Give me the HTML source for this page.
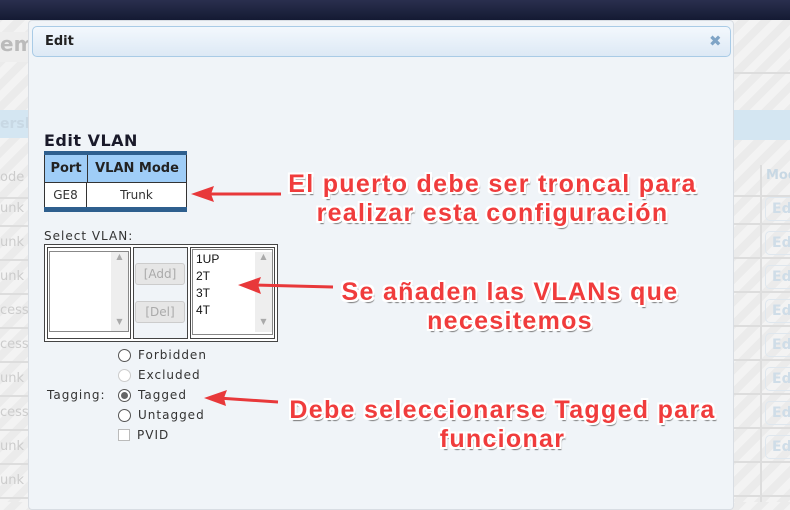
<!DOCTYPE html>
<html><head><meta charset="utf-8"><style>
*{margin:0;padding:0;box-sizing:border-box}
body{width:790px;height:502px;overflow:hidden;position:relative;font-family:"DejaVu Sans","Liberation Sans",sans-serif;background:repeating-linear-gradient(135deg,#f3f3f3 0 8px,#ebebeb 8px 16px)}
.abs{position:absolute}
.top{left:0;top:0;width:790px;height:20px;background:linear-gradient(#2a2f4e,#141a33)}
.row{position:absolute;height:34px;border-bottom:2px solid #ddd;font-size:13px;color:#ccc}
.dlg{left:28px;top:20px;width:706px;height:490px;background:#f0f4f8;border:1px solid #d8dde3;border-radius:4px}
.hdr{left:32px;top:26px;width:699px;height:31px;border:1px solid #a9cbe6;border-radius:5px;background:linear-gradient(#f3f8fd,#dde9f5);font-weight:bold;font-size:13px;color:#222;padding:7px 0 0 12px}
.ann{position:absolute;font-family:"Liberation Sans",sans-serif;font-weight:bold;font-size:25px;color:#f03c3c;text-align:center;line-height:29px;letter-spacing:1.3px;white-space:nowrap;
text-shadow:-2px -2px 0 #fff,2px -2px 0 #fff,-2px 2px 0 #fff,2px 2px 0 #fff,0 2px 0 #fff,0 -2px 0 #fff,2px 0 0 #fff,-2px 0 0 #fff,2px 3px 1px #777}
.lbl{font-size:12px;color:#333;letter-spacing:1px}
.rad{position:absolute;width:13px;height:13px;border:1px solid #555;border-radius:50%;background:#fff}
.ed{border:1px solid #dfe7ee;border-radius:5px;padding-left:6px;width:40px;height:24px;line-height:22px;margin-bottom:10px}
</style></head><body>
<div class="abs top"></div>
<div class="abs" style="left:0;top:32px;width:28px;height:30px;font-size:20px;color:#bbb;font-weight:bold;background:#eee">em</div>
<div class="abs" style="left:0;top:110px;width:28px;height:28px;background:#d4e6f2;color:#c8d8e4;font-size:14px;font-weight:bold;padding-top:6px">ersh</div>
<div class="row" style="left:0;top:165px;width:28px;padding-top:5px">ode</div>
<div class="row" style="left:0;top:193px;width:28px;padding-top:8px">unk</div>
<div class="row" style="left:0;top:227px;width:28px;padding-top:8px">unk</div>
<div class="row" style="left:0;top:261px;width:28px;padding-top:8px">unk</div>
<div class="row" style="left:0;top:295px;width:28px;padding-top:8px">cess</div>
<div class="row" style="left:0;top:329px;width:28px;padding-top:8px">cess</div>
<div class="row" style="left:0;top:363px;width:28px;padding-top:8px">unk</div>
<div class="row" style="left:0;top:397px;width:28px;padding-top:8px">cess</div>
<div class="row" style="left:0;top:431px;width:28px;padding-top:8px">unk</div>
<div class="row" style="left:0;top:465px;width:28px;padding-top:8px">unk</div>
<div class="abs" style="left:734px;top:72px;width:56px;height:2px;background:#ddd"></div>
<div class="abs" style="left:734px;top:110px;width:56px;height:30px;background:#d4e6f2"></div>
<div class="abs" style="left:760px;top:165px;width:2px;height:337px;background:#ddd"></div>
<div class="row" style="left:734px;top:163px;width:56px;padding:5px 0 0 32px;color:#c8d8e4;font-weight:bold">Mod</div>
<div class="row" style="left:734px;top:191px;width:56px"></div>
<div class="row" style="left:734px;top:225px;width:56px"></div>
<div class="row" style="left:734px;top:259px;width:56px"></div>
<div class="row" style="left:734px;top:293px;width:56px"></div>
<div class="row" style="left:734px;top:327px;width:56px"></div>
<div class="row" style="left:734px;top:361px;width:56px"></div>
<div class="row" style="left:734px;top:395px;width:56px"></div>
<div class="row" style="left:734px;top:429px;width:56px"></div>
<div class="row" style="left:734px;top:463px;width:56px"></div>
<div class="abs" style="left:765px;top:197px;font-size:14px;color:#cfdde8;font-weight:bold">
<div class="ed">Ed</div><div class="ed">Ed</div><div class="ed">Ed</div><div class="ed">Ed</div>
<div class="ed">Ed</div><div class="ed">Ed</div><div class="ed">Ed</div><div class="ed">Ed</div>
</div>
<div class="abs dlg"></div>
<div class="abs hdr">Edit</div>
<div class="abs" style="left:709px;top:32px;font-size:15px;font-weight:bold;color:#7fa4c6">✖</div>
<div class="abs" style="left:44px;top:131px;font-size:16px;font-weight:bold;color:#1a1a2a;letter-spacing:0.5px">Edit VLAN</div>
<div class="abs" style="left:44px;top:151px;width:143px;height:61px;background:#2e5f8e;padding:4px 0 0 0">
 <div style="display:flex;height:27px;background:#9fcdf7;font-size:13px;font-weight:bold;color:#222;border-left:1px solid #333;border-right:1px solid #333">
  <div style="width:43px;border-right:1px solid #333;text-align:center;line-height:27px">Port</div>
  <div style="flex:1;text-align:center;line-height:27px">VLAN Mode</div></div>
 <div style="display:flex;height:25px;background:#fff;font-size:12px;color:#333;border:1px solid #333;border-bottom:none">
  <div style="width:42px;border-right:1px solid #333;text-align:center;line-height:24px">GE8</div>
  <div style="flex:1;text-align:center;line-height:24px">Trunk</div></div>
</div>
<div class="abs lbl" style="left:44px;top:229px">Select VLAN:</div>
<div class="abs" style="left:44px;top:244px;width:234px;height:98px;border:1px solid #444;background:#fff"></div>
<div class="abs" style="left:47px;top:247px;width:84px;height:92px;border:1px solid #444"></div>
<div class="abs" style="left:49px;top:251px;width:80px;height:81px;border:1px solid #888;background:#fff"></div>
<div class="abs" style="left:111px;top:252px;width:17px;height:79px;background:#eee;font-size:8px;color:#aaa;text-align:center">▲<div style="margin-top:56px">▼</div></div>
<div class="abs" style="left:133px;top:247px;width:55px;height:92px;border:1px solid #444;background:#f0f4f8"></div>
<div class="abs" style="left:135px;top:263px;width:50px;height:22px;border:1px solid #ccc;border-radius:3px;background:#e6e6e6;color:#aaa;font-size:12px;text-align:center;line-height:20px">[Add]</div>
<div class="abs" style="left:135px;top:301px;width:50px;height:22px;border:1px solid #ccc;border-radius:3px;background:#e6e6e6;color:#aaa;font-size:12px;text-align:center;line-height:20px">[Del]</div>
<div class="abs" style="left:190px;top:247px;width:85px;height:92px;border:1px solid #444"></div>
<div class="abs" style="left:192px;top:249px;width:81px;height:86px;border:1px solid #888;background:#fff;font-size:12px;line-height:17px;color:#111;padding:1px 0 0 3px;font-family:'Liberation Sans',sans-serif">1UP<br>2T<br>3T<br>4T</div>
<div class="abs" style="left:255px;top:252px;width:17px;height:80px;background:#eee;font-size:8px;color:#aaa;text-align:center">▲<div style="margin-top:56px">▼</div></div>
<div class="rad" style="left:118px;top:349px"></div><div class="abs lbl" style="left:138px;top:348px">Forbidden</div>
<div class="rad" style="left:118px;top:369px;border-color:#ccc"></div><div class="abs lbl" style="left:138px;top:368px">Excluded</div>
<div class="abs lbl" style="left:47px;top:388px">Tagging:</div>
<div class="rad" style="left:118px;top:389px"><div style="width:7px;height:7px;margin:2px;border-radius:50%;background:#666"></div></div><div class="abs lbl" style="left:138px;top:388px">Tagged</div>
<div class="rad" style="left:118px;top:409px"></div><div class="abs lbl" style="left:138px;top:408px">Untagged</div>
<div class="abs" style="left:118px;top:429px;width:12px;height:12px;border:1px solid #bbb;background:#fff"></div><div class="abs lbl" style="left:137px;top:428px">PVID</div>
<svg class="abs" style="left:0;top:0" width="790" height="502">
<g stroke="#e8383a" stroke-width="3" fill="#e8383a">
<line x1="205" y1="194" x2="281" y2="194"/><polygon points="191,194 214,186 211,194 214,202" stroke="none"/>
<line x1="252" y1="285" x2="333" y2="287"/><polygon points="238,285 261,277 258,285 261,294" stroke="none"/>
<line x1="218" y1="398" x2="278" y2="402"/><polygon points="204,398 227,390 224,398 226,406" stroke="none"/>
</g></svg>
<div class="ann" style="left:280px;top:170px;width:425px">El puerto debe ser troncal para<br>realizar esta configuración</div>
<div class="ann" style="left:330px;top:278px;width:360px">Se añaden las VLANs que<br>necesitemos</div>
<div class="ann" style="left:275px;top:396px;width:455px">Debe seleccionarse Tagged para<br>funcionar</div>
</body></html>
